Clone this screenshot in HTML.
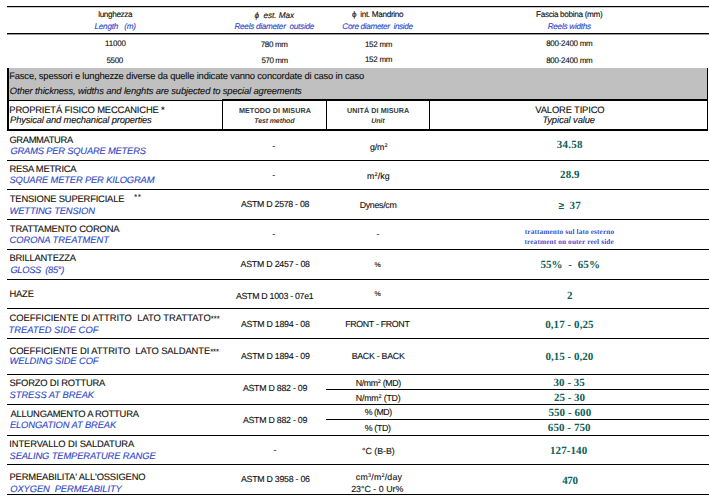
<!DOCTYPE html><html><head><meta charset="utf-8"><title>Scheda tecnica</title><style>
*{margin:0;padding:0}
html,body{width:709px;height:497px;background:#fff;overflow:hidden}
body{position:relative;font-family:'Liberation Sans',sans-serif}
.t{position:absolute;white-space:pre;line-height:1;-webkit-text-stroke:0.12px currentColor;text-rendering:geometricPrecision}
.t s{text-decoration:none;font-size:7.6px}
.t sup{font-size:62%;vertical-align:0;position:relative;top:-0.55em;line-height:0}
.ln{position:absolute;background:#000}
</style></head><body>
<div class="ln" style="left:7px;top:68px;width:701px;height:32px;background:#c0c0c0"></div>
<div class="ln" style="left:7px;top:6px;width:702px;height:1px;background:#000"></div>
<div class="ln" style="left:7px;top:7px;width:702px;height:1px;background:#c8c8c8"></div>
<div class="ln" style="left:7px;top:33px;width:702px;height:1px;background:#000"></div>
<div class="ln" style="left:7px;top:34px;width:702px;height:1px;background:#999"></div>
<div class="ln" style="left:7px;top:68px;width:2px;height:63px;background:#000"></div>
<div class="ln" style="left:707px;top:68px;width:1px;height:63px;background:#000"></div>
<div class="ln" style="left:7px;top:100px;width:701px;height:1px;background:#000"></div>
<div class="ln" style="left:222px;top:99px;width:486px;height:1px;background:#000"></div>
<div class="ln" style="left:7px;top:129px;width:701px;height:2px;background:#000"></div>
<div class="ln" style="left:222px;top:100px;width:1px;height:30px;background:#000"></div>
<div class="ln" style="left:326px;top:100px;width:1px;height:30px;background:#000"></div>
<div class="ln" style="left:429px;top:100px;width:1px;height:30px;background:#000"></div>
<div class="ln" style="left:7px;top:160px;width:702px;height:1px;background:#000"></div>
<div class="ln" style="left:7px;top:189px;width:702px;height:1px;background:#000"></div>
<div class="ln" style="left:7px;top:219px;width:702px;height:1px;background:#000"></div>
<div class="ln" style="left:7px;top:249px;width:702px;height:1px;background:#000"></div>
<div class="ln" style="left:7px;top:279px;width:702px;height:1px;background:#000"></div>
<div class="ln" style="left:7px;top:308px;width:702px;height:1px;background:#000"></div>
<div class="ln" style="left:7px;top:338px;width:702px;height:1px;background:#000"></div>
<div class="ln" style="left:7px;top:374px;width:702px;height:1px;background:#000"></div>
<div class="ln" style="left:7px;top:404px;width:702px;height:1px;background:#000"></div>
<div class="ln" style="left:7px;top:435px;width:702px;height:1px;background:#000"></div>
<div class="ln" style="left:7px;top:464px;width:702px;height:1px;background:#000"></div>
<div class="ln" style="left:7px;top:494px;width:702px;height:1px;background:#000"></div>
<div class="ln" style="left:326px;top:389px;width:383px;height:1px;background:#000"></div>
<div class="ln" style="left:326px;top:419px;width:383px;height:1px;background:#000"></div>
<div class="t" id="t0" style="left:98.18px;top:10.89px;font-family:'Liberation Sans', sans-serif;font-size:8.2px;font-style:normal;font-weight:normal;color:#111;letter-spacing:-0.363px">lunghezza</div>
<div class="t" id="t1" style="left:94.47px;top:22.99px;font-family:'Liberation Sans', sans-serif;font-size:8.2px;font-style:italic;font-weight:normal;color:#2f48c8;letter-spacing:-0.233px">Length &nbsp; (m)</div>
<div class="t" id="t2" style="left:254.45px;top:11.84px;font-family:'Liberation Sans', sans-serif;font-size:8.2px;font-style:normal;font-weight:normal;color:#111;letter-spacing:-0.044px"><i>&#981;&nbsp; est. Max</i></div>
<div class="t" id="t3" style="left:234.47px;top:22.97px;font-family:'Liberation Sans', sans-serif;font-size:8.2px;font-style:italic;font-weight:normal;color:#2f48c8;letter-spacing:-0.283px">Reels diameter &nbsp;outside</div>
<div class="t" id="t4" style="left:352.05px;top:11.16px;font-family:'Liberation Sans', sans-serif;font-size:8.2px;font-style:normal;font-weight:normal;color:#111;letter-spacing:-0.328px">&#981;&nbsp; int. Mandrino</div>
<div class="t" id="t5" style="left:342.34px;top:23.05px;font-family:'Liberation Sans', sans-serif;font-size:8.2px;font-style:italic;font-weight:normal;color:#2f48c8;letter-spacing:-0.355px">Core diameter &nbsp;inside</div>
<div class="t" id="t6" style="left:536.03px;top:10.87px;font-family:'Liberation Sans', sans-serif;font-size:8.2px;font-style:normal;font-weight:normal;color:#111;letter-spacing:-0.326px">Fascia bobina (mm)</div>
<div class="t" id="t7" style="left:547.67px;top:23.07px;font-family:'Liberation Sans', sans-serif;font-size:8.2px;font-style:italic;font-weight:normal;color:#2f48c8;letter-spacing:-0.262px">Reels widths</div>
<div class="t" id="t8" style="left:104.99px;top:40.39px;font-family:'Liberation Sans', sans-serif;font-size:8.0px;font-style:normal;font-weight:normal;color:#111;letter-spacing:-0.202px">11000</div>
<div class="t" id="t9" style="left:106.38px;top:56.79px;font-family:'Liberation Sans', sans-serif;font-size:8.0px;font-style:normal;font-weight:normal;color:#111;letter-spacing:-0.285px">5500</div>
<div class="t" id="t10" style="left:260.74px;top:40.51px;font-family:'Liberation Sans', sans-serif;font-size:8.0px;font-style:normal;font-weight:normal;color:#111;letter-spacing:-0.342px">780 mm</div>
<div class="t" id="t11" style="left:261.38px;top:57.12px;font-family:'Liberation Sans', sans-serif;font-size:8.0px;font-style:normal;font-weight:normal;color:#111;letter-spacing:-0.429px">570 mm</div>
<div class="t" id="t12" style="left:364.88px;top:40.67px;font-family:'Liberation Sans', sans-serif;font-size:8.0px;font-style:normal;font-weight:normal;color:#111;letter-spacing:-0.267px">152 mm</div>
<div class="t" id="t13" style="left:364.88px;top:56.27px;font-family:'Liberation Sans', sans-serif;font-size:8.0px;font-style:normal;font-weight:normal;color:#111;letter-spacing:-0.267px">152 mm</div>
<div class="t" id="t14" style="left:546.19px;top:40.41px;font-family:'Liberation Sans', sans-serif;font-size:8.0px;font-style:normal;font-weight:normal;color:#111;letter-spacing:-0.286px">800-2400 mm</div>
<div class="t" id="t15" style="left:546.19px;top:57.01px;font-family:'Liberation Sans', sans-serif;font-size:8.0px;font-style:normal;font-weight:normal;color:#111;letter-spacing:-0.286px">800-2400 mm</div>
<div class="t" id="t16" style="left:9.22px;top:70.82px;font-family:'Liberation Sans', sans-serif;font-size:9.4px;font-style:normal;font-weight:normal;color:#111;letter-spacing:-0.162px">Fasce, spessori e lunghezze diverse da quelle indicate vanno concordate di caso in caso</div>
<div class="t" id="t17" style="left:9.84px;top:86.33px;font-family:'Liberation Sans', sans-serif;font-size:9.4px;font-style:italic;font-weight:normal;color:#111;letter-spacing:-0.132px">Other thickness, widths and lenghts are subjected to special agreements</div>
<div class="t" id="t18" style="left:9.31px;top:105.09px;font-family:'Liberation Sans', sans-serif;font-size:9.4px;font-style:normal;font-weight:normal;color:#111;letter-spacing:-0.161px">PROPRIET&Aacute; FISICO MECCANICHE *</div>
<div class="t" id="t19" style="left:10.09px;top:114.76px;font-family:'Liberation Sans', sans-serif;font-size:9.4px;font-style:italic;font-weight:normal;color:#111;letter-spacing:-0.174px">Physical and mechanical properties</div>
<div class="t" id="t20" style="left:238.95px;top:107.18px;font-family:'Liberation Sans', sans-serif;font-size:7.2px;font-style:normal;font-weight:bold;color:#383838;letter-spacing:0.071px;-webkit-text-stroke:0px currentColor">METODO DI MISURA</div>
<div class="t" id="t21" style="left:254.23px;top:117.94px;font-family:'Liberation Sans', sans-serif;font-size:7.0px;font-style:italic;font-weight:bold;color:#383838;letter-spacing:-0.108px;-webkit-text-stroke:0px currentColor">Test method</div>
<div class="t" id="t22" style="left:347.00px;top:107.38px;font-family:'Liberation Sans', sans-serif;font-size:7.2px;font-style:normal;font-weight:bold;color:#383838;letter-spacing:0.056px;-webkit-text-stroke:0px currentColor">UNIT&Aacute; DI MISURA</div>
<div class="t" id="t23" style="left:371.18px;top:117.94px;font-family:'Liberation Sans', sans-serif;font-size:7.0px;font-style:italic;font-weight:bold;color:#383838;letter-spacing:-0.088px;-webkit-text-stroke:0px currentColor">Unit</div>
<div class="t" id="t24" style="left:535.35px;top:105.11px;font-family:'Liberation Sans', sans-serif;font-size:9.4px;font-style:normal;font-weight:normal;color:#111;letter-spacing:-0.150px">VALORE TIPICO</div>
<div class="t" id="t25" style="left:542.38px;top:114.98px;font-family:'Liberation Sans', sans-serif;font-size:9.4px;font-style:italic;font-weight:normal;color:#111;letter-spacing:-0.114px">Typical value</div>
<div class="t" id="t26" style="left:9.44px;top:135.16px;font-family:'Liberation Sans', sans-serif;font-size:9.4px;font-style:normal;font-weight:normal;color:#111;letter-spacing:-0.367px">GRAMMATURA</div>
<div class="t" id="t27" style="left:10.44px;top:145.87px;font-family:'Liberation Sans', sans-serif;font-size:9.4px;font-style:italic;font-weight:normal;color:#2f48c8;letter-spacing:-0.209px">GRAMS PER SQUARE METERS</div>
<div class="t" id="t28" style="left:9.51px;top:163.56px;font-family:'Liberation Sans', sans-serif;font-size:9.4px;font-style:normal;font-weight:normal;color:#111;letter-spacing:-0.254px">RESA METRICA</div>
<div class="t" id="t29" style="left:9.53px;top:175.37px;font-family:'Liberation Sans', sans-serif;font-size:9.4px;font-style:italic;font-weight:normal;color:#2f48c8;letter-spacing:-0.168px">SQUARE METER PER KILOGRAM</div>
<div class="t" id="t30" style="left:9.83px;top:193.92px;font-family:'Liberation Sans', sans-serif;font-size:9.4px;font-style:normal;font-weight:normal;color:#111;letter-spacing:-0.180px">TENSIONE SUPERFICIALE</div>
<div class="t" id="t31" style="left:9.58px;top:206.03px;font-family:'Liberation Sans', sans-serif;font-size:9.4px;font-style:italic;font-weight:normal;color:#2f48c8;letter-spacing:-0.154px">WETTING TENSION</div>
<div class="t" id="t32" style="left:9.83px;top:223.72px;font-family:'Liberation Sans', sans-serif;font-size:9.4px;font-style:normal;font-weight:normal;color:#111;letter-spacing:-0.166px">TRATTAMENTO CORONA</div>
<div class="t" id="t33" style="left:9.46px;top:234.54px;font-family:'Liberation Sans', sans-serif;font-size:9.4px;font-style:italic;font-weight:normal;color:#2f48c8;letter-spacing:-0.038px">CORONA TREATMENT</div>
<div class="t" id="t34" style="left:9.51px;top:253.27px;font-family:'Liberation Sans', sans-serif;font-size:9.4px;font-style:normal;font-weight:normal;color:#111;letter-spacing:-0.208px">BRILLANTEZZA</div>
<div class="t" id="t35" style="left:10.44px;top:264.51px;font-family:'Liberation Sans', sans-serif;font-size:9.4px;font-style:italic;font-weight:normal;color:#2f48c8;letter-spacing:-0.370px">GLOSS &nbsp;(85&deg;)</div>
<div class="t" id="t36" style="left:9.51px;top:288.87px;font-family:'Liberation Sans', sans-serif;font-size:9.4px;font-style:normal;font-weight:normal;color:#111;letter-spacing:-0.205px">HAZE</div>
<div class="t" id="t37" style="left:9.43px;top:312.94px;font-family:'Liberation Sans', sans-serif;font-size:9.4px;font-style:normal;font-weight:normal;color:#111;letter-spacing:0.020px">COEFFICIENTE DI ATTRITO &nbsp;LATO TRATTATO<s>***</s></div>
<div class="t" id="t38" style="left:8.43px;top:324.90px;font-family:'Liberation Sans', sans-serif;font-size:9.4px;font-style:italic;font-weight:normal;color:#2f48c8;letter-spacing:0.004px">TREATED SIDE COF</div>
<div class="t" id="t39" style="left:9.43px;top:345.75px;font-family:'Liberation Sans', sans-serif;font-size:9.4px;font-style:normal;font-weight:normal;color:#111;letter-spacing:-0.058px">COEFFICIENTE DI ATTRITO &nbsp;LATO SALDANTE<s>***</s></div>
<div class="t" id="t40" style="left:9.58px;top:356.43px;font-family:'Liberation Sans', sans-serif;font-size:9.4px;font-style:italic;font-weight:normal;color:#2f48c8;letter-spacing:-0.110px">WELDING SIDE COF</div>
<div class="t" id="t41" style="left:9.49px;top:377.67px;font-family:'Liberation Sans', sans-serif;font-size:9.4px;font-style:normal;font-weight:normal;color:#111;letter-spacing:-0.192px">SFORZO DI ROTTURA</div>
<div class="t" id="t42" style="left:9.53px;top:389.98px;font-family:'Liberation Sans', sans-serif;font-size:9.4px;font-style:italic;font-weight:normal;color:#2f48c8;letter-spacing:-0.059px">STRESS AT BREAK</div>
<div class="t" id="t43" style="left:10.60px;top:408.94px;font-family:'Liberation Sans', sans-serif;font-size:9.4px;font-style:normal;font-weight:normal;color:#111;letter-spacing:-0.231px">ALLUNGAMENTO A ROTTURA</div>
<div class="t" id="t44" style="left:9.92px;top:419.92px;font-family:'Liberation Sans', sans-serif;font-size:9.4px;font-style:italic;font-weight:normal;color:#2f48c8;letter-spacing:-0.133px">ELONGATION AT BREAK</div>
<div class="t" id="t45" style="left:9.30px;top:438.78px;font-family:'Liberation Sans', sans-serif;font-size:9.4px;font-style:normal;font-weight:normal;color:#111;letter-spacing:-0.124px">INTERVALLO DI SALDATURA</div>
<div class="t" id="t46" style="left:9.53px;top:451.09px;font-family:'Liberation Sans', sans-serif;font-size:9.4px;font-style:italic;font-weight:normal;color:#2f48c8;letter-spacing:-0.134px">SEALING TEMPERATURE RANGE</div>
<div class="t" id="t47" style="left:9.51px;top:471.54px;font-family:'Liberation Sans', sans-serif;font-size:9.4px;font-style:normal;font-weight:normal;color:#111;letter-spacing:-0.154px">PERMEABILITA' ALL'OSSIGENO</div>
<div class="t" id="t48" style="left:10.28px;top:483.76px;font-family:'Liberation Sans', sans-serif;font-size:9.4px;font-style:italic;font-weight:normal;color:#2f48c8;letter-spacing:-0.108px">OXYGEN &nbsp;PERMEABILITY</div>
<div class="t" id="t49" style="left:134.20px;top:194.34px;font-family:'Liberation Sans', sans-serif;font-size:7.0px;font-style:normal;font-weight:normal;color:#111;letter-spacing:0.964px">**</div>
<div class="t" id="t50" style="left:272.21px;top:141.64px;font-family:'Liberation Sans', sans-serif;font-size:8.8px;font-style:normal;font-weight:normal;color:#111;letter-spacing:0.000px">-</div>
<div class="t" id="t51" style="left:272.21px;top:170.64px;font-family:'Liberation Sans', sans-serif;font-size:8.8px;font-style:normal;font-weight:normal;color:#111;letter-spacing:0.000px">-</div>
<div class="t" id="t52" style="left:240.89px;top:200.30px;font-family:'Liberation Sans', sans-serif;font-size:8.8px;font-style:normal;font-weight:normal;color:#111;letter-spacing:-0.289px">ASTM D 2578 - 08</div>
<div class="t" id="t53" style="left:272.21px;top:230.44px;font-family:'Liberation Sans', sans-serif;font-size:8.8px;font-style:normal;font-weight:normal;color:#111;letter-spacing:0.000px">-</div>
<div class="t" id="t54" style="left:240.57px;top:260.34px;font-family:'Liberation Sans', sans-serif;font-size:8.8px;font-style:normal;font-weight:normal;color:#111;letter-spacing:-0.229px">ASTM D 2457 - 08</div>
<div class="t" id="t55" style="left:235.89px;top:291.54px;font-family:'Liberation Sans', sans-serif;font-size:8.8px;font-style:normal;font-weight:normal;color:#111;letter-spacing:-0.282px">ASTM D 1003 - 07e1</div>
<div class="t" id="t56" style="left:240.99px;top:319.70px;font-family:'Liberation Sans', sans-serif;font-size:8.8px;font-style:normal;font-weight:normal;color:#111;letter-spacing:-0.264px">ASTM D 1894 - 08</div>
<div class="t" id="t57" style="left:240.99px;top:352.30px;font-family:'Liberation Sans', sans-serif;font-size:8.8px;font-style:normal;font-weight:normal;color:#111;letter-spacing:-0.265px">ASTM D 1894 - 09</div>
<div class="t" id="t58" style="left:242.89px;top:384.30px;font-family:'Liberation Sans', sans-serif;font-size:8.8px;font-style:normal;font-weight:normal;color:#111;letter-spacing:-0.247px">ASTM D 882 - 09</div>
<div class="t" id="t59" style="left:242.89px;top:416.10px;font-family:'Liberation Sans', sans-serif;font-size:8.8px;font-style:normal;font-weight:normal;color:#111;letter-spacing:-0.247px">ASTM D 882 - 09</div>
<div class="t" id="t60" style="left:273.46px;top:445.84px;font-family:'Liberation Sans', sans-serif;font-size:8.8px;font-style:normal;font-weight:normal;color:#111;letter-spacing:0.000px">-</div>
<div class="t" id="t61" style="left:240.99px;top:475.23px;font-family:'Liberation Sans', sans-serif;font-size:8.8px;font-style:normal;font-weight:normal;color:#111;letter-spacing:-0.262px">ASTM D 3958 - 06</div>
<div class="t" id="t62" style="left:369.94px;top:143.20px;font-family:'Liberation Sans', sans-serif;font-size:8.8px;font-style:normal;font-weight:normal;color:#111;letter-spacing:-0.076px">g/m<sup>2</sup></div>
<div class="t" id="t63" style="left:367.07px;top:172.41px;font-family:'Liberation Sans', sans-serif;font-size:8.8px;font-style:normal;font-weight:normal;color:#111;letter-spacing:0.097px">m<sup>2</sup>/kg</div>
<div class="t" id="t64" style="left:359.64px;top:200.90px;font-family:'Liberation Sans', sans-serif;font-size:8.8px;font-style:normal;font-weight:normal;color:#111;letter-spacing:-0.275px">Dynes/cm</div>
<div class="t" id="t65" style="left:376.46px;top:230.44px;font-family:'Liberation Sans', sans-serif;font-size:8.8px;font-style:normal;font-weight:normal;color:#111;letter-spacing:0.000px">-</div>
<div class="t" id="t66" style="left:374.43px;top:261.74px;font-family:'Liberation Sans', sans-serif;font-size:7.0px;font-style:normal;font-weight:normal;color:#111;letter-spacing:0.000px">%</div>
<div class="t" id="t67" style="left:374.43px;top:290.94px;font-family:'Liberation Sans', sans-serif;font-size:7.0px;font-style:normal;font-weight:normal;color:#111;letter-spacing:0.000px">%</div>
<div class="t" id="t68" style="left:345.18px;top:319.79px;font-family:'Liberation Sans', sans-serif;font-size:8.8px;font-style:normal;font-weight:normal;color:#111;letter-spacing:-0.306px">FRONT - FRONT</div>
<div class="t" id="t69" style="left:351.64px;top:352.41px;font-family:'Liberation Sans', sans-serif;font-size:8.8px;font-style:normal;font-weight:normal;color:#111;letter-spacing:-0.261px">BACK - BACK</div>
<div class="t" id="t70" style="left:355.63px;top:378.54px;font-family:'Liberation Sans', sans-serif;font-size:8.8px;font-style:normal;font-weight:normal;color:#111;letter-spacing:-0.315px">N/mm<sup>2</sup> (MD)</div>
<div class="t" id="t71" style="left:355.75px;top:393.84px;font-family:'Liberation Sans', sans-serif;font-size:8.8px;font-style:normal;font-weight:normal;color:#111;letter-spacing:-0.176px">N/mm<sup>2</sup> (TD)</div>
<div class="t" id="t72" style="left:364.71px;top:408.21px;font-family:'Liberation Sans', sans-serif;font-size:8.8px;font-style:normal;font-weight:normal;color:#111;letter-spacing:-0.472px">% (MD)</div>
<div class="t" id="t73" style="left:364.75px;top:423.76px;font-family:'Liberation Sans', sans-serif;font-size:8.8px;font-style:normal;font-weight:normal;color:#111;letter-spacing:-0.342px">% (TD)</div>
<div class="t" id="t74" style="left:362.04px;top:446.83px;font-family:'Liberation Sans', sans-serif;font-size:8.8px;font-style:normal;font-weight:normal;color:#111;letter-spacing:-0.015px">&deg;C (B-B)</div>
<div class="t" id="t75" style="left:355.85px;top:472.53px;font-family:'Liberation Sans', sans-serif;font-size:8.8px;font-style:normal;font-weight:normal;color:#111;letter-spacing:0.210px">cm<sup>3</sup>/m<sup>2</sup>/day</div>
<div class="t" id="t76" style="left:351.14px;top:484.89px;font-family:'Liberation Sans', sans-serif;font-size:8.8px;font-style:normal;font-weight:normal;color:#111;letter-spacing:0.025px">23&deg;C - 0 Ur%</div>
<div class="t" id="t77" style="left:556.87px;top:140.09px;font-family:'Liberation Serif', serif;font-size:11.0px;font-style:normal;font-weight:bold;color:#0e6059;letter-spacing:0.194px;-webkit-text-stroke:0px currentColor">34.58</div>
<div class="t" id="t78" style="left:560.06px;top:170.49px;font-family:'Liberation Serif', serif;font-size:11.0px;font-style:normal;font-weight:bold;color:#0e6059;letter-spacing:0.080px;-webkit-text-stroke:0px currentColor">28.9</div>
<div class="t" id="t79" style="left:558.39px;top:201.80px;font-family:'Liberation Sans', sans-serif;font-size:10.0px;font-style:normal;font-weight:bold;color:#0e6059;letter-spacing:0.000px;-webkit-text-stroke:0px currentColor">&ge;</div>
<div class="t" id="t80" style="left:569.47px;top:201.02px;font-family:'Liberation Serif', serif;font-size:11.0px;font-style:normal;font-weight:bold;color:#0e6059;letter-spacing:0.194px;-webkit-text-stroke:0px currentColor">37</div>
<div class="t" id="t81" style="left:524.75px;top:227.51px;font-family:'Liberation Serif', serif;font-size:7.3px;font-style:normal;font-weight:bold;color:#3b4fd0;letter-spacing:0.120px;-webkit-text-stroke:0px currentColor">trattamento sul lato esterno</div>
<div class="t" id="t82" style="left:524.47px;top:237.71px;font-family:'Liberation Serif', serif;font-size:7.3px;font-style:normal;font-weight:bold;color:#3b4fd0;letter-spacing:0.125px;-webkit-text-stroke:0px currentColor">treatment on outer reel side</div>
<div class="t" id="t83" style="left:540.39px;top:259.50px;font-family:'Liberation Serif', serif;font-size:11.0px;font-style:normal;font-weight:bold;color:#0e6059;letter-spacing:0.088px;-webkit-text-stroke:0px currentColor">55% &nbsp;- &nbsp;65%</div>
<div class="t" id="t84" style="left:567.06px;top:290.62px;font-family:'Liberation Serif', serif;font-size:11.0px;font-style:normal;font-weight:bold;color:#0e6059;letter-spacing:0.000px;-webkit-text-stroke:0px currentColor">2</div>
<div class="t" id="t85" style="left:545.20px;top:319.81px;font-family:'Liberation Serif', serif;font-size:11.0px;font-style:normal;font-weight:bold;color:#0e6059;letter-spacing:0.066px;-webkit-text-stroke:0px currentColor">0,17 - 0,25</div>
<div class="t" id="t86" style="left:545.60px;top:352.45px;font-family:'Liberation Serif', serif;font-size:11.0px;font-style:normal;font-weight:bold;color:#0e6059;letter-spacing:-0.006px;-webkit-text-stroke:0px currentColor">0,15 - 0,20</div>
<div class="t" id="t87" style="left:553.58px;top:378.02px;font-family:'Liberation Serif', serif;font-size:11.0px;font-style:normal;font-weight:bold;color:#0e6059;letter-spacing:0.022px;-webkit-text-stroke:0px currentColor">30 - 35</div>
<div class="t" id="t88" style="left:553.99px;top:392.62px;font-family:'Liberation Serif', serif;font-size:11.0px;font-style:normal;font-weight:bold;color:#0e6059;letter-spacing:-0.024px;-webkit-text-stroke:0px currentColor">25 - 30</div>
<div class="t" id="t89" style="left:548.39px;top:407.62px;font-family:'Liberation Serif', serif;font-size:11.0px;font-style:normal;font-weight:bold;color:#0e6059;letter-spacing:0.082px;-webkit-text-stroke:0px currentColor">550 - 600</div>
<div class="t" id="t90" style="left:547.84px;top:423.02px;font-family:'Liberation Serif', serif;font-size:11.0px;font-style:normal;font-weight:bold;color:#0e6059;letter-spacing:0.065px;-webkit-text-stroke:0px currentColor">650 - 750</div>
<div class="t" id="t91" style="left:549.96px;top:445.82px;font-family:'Liberation Serif', serif;font-size:11.0px;font-style:normal;font-weight:bold;color:#0e6059;letter-spacing:0.088px;-webkit-text-stroke:0px currentColor">127-140</div>
<div class="t" id="t92" style="left:562.13px;top:476.42px;font-family:'Liberation Serif', serif;font-size:11.0px;font-style:normal;font-weight:bold;color:#0e6059;letter-spacing:-0.271px;-webkit-text-stroke:0px currentColor">470</div>
</body></html>
